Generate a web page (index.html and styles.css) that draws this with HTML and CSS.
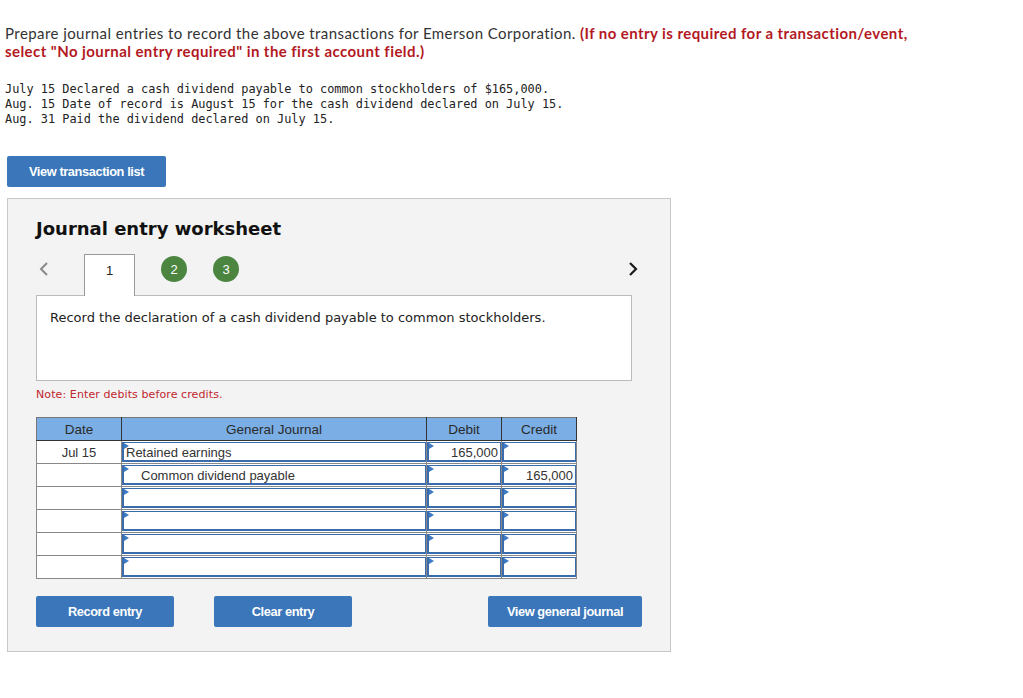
FILE: index.html
```html
<!DOCTYPE html>
<html lang="en">
<head>
    <meta charset="UTF-8">
    <title>Journal entry worksheet</title>
    <link rel="stylesheet" href="styles.css">
</head>
<body>
    <p class="intro">
        Prepare journal entries to record the above transactions for Emerson Corporation.
        <strong>(If no entry is required for a transaction/event,</strong>
        <strong>select "No journal entry required" in the first account field.)</strong>
    </p>

    <pre class="transactions">July 15 Declared a cash dividend payable to common stockholders of $165,000.
Aug. 15 Date of record is August 15 for the cash dividend declared on July 15.
Aug. 31 Paid the dividend declared on July 15.</pre>

    <button class="btn btn-list">View transaction list</button>

    <div class="worksheet">
        <h2>Journal entry worksheet</h2>

        <div class="tabs">
            <span class="arrow arrow-prev">
                <svg width="10" height="16" viewBox="0 0 10 16"><path d="M8 2 L2 8 L8 14" fill="none" stroke="#8a8a8a" stroke-width="2"/></svg>
            </span>
            <span class="tab active">1</span>
            <span class="tab done">2</span>
            <span class="tab done">3</span>
            <span class="arrow arrow-next">
                <svg width="10" height="16" viewBox="0 0 10 16"><path d="M2 2 L8 8 L2 14" fill="none" stroke="#1a1a1a" stroke-width="2.2"/></svg>
            </span>
        </div>

        <div class="description">Record the declaration of a cash dividend payable to common stockholders.</div>

        <p class="note">Note: Enter debits before credits.</p>

        <table class="journal">
            <thead>
                <tr>
                    <th class="col-date">Date</th>
                    <th class="col-account">General Journal</th>
                    <th class="col-amount">Debit</th>
                    <th class="col-amount">Credit</th>
                </tr>
            </thead>
            <tbody>
                <tr>
                    <td class="date">Jul 15</td>
                    <td><div class="field">Retained earnings</div></td>
                    <td><div class="field num">165,000</div></td>
                    <td><div class="field num"></div></td>
                </tr>
                <tr>
                    <td class="date"></td>
                    <td><div class="field indent">Common dividend payable</div></td>
                    <td><div class="field num"></div></td>
                    <td><div class="field num">165,000</div></td>
                </tr>
                <tr>
                    <td class="date"></td>
                    <td><div class="field"></div></td>
                    <td><div class="field num"></div></td>
                    <td><div class="field num"></div></td>
                </tr>
                <tr>
                    <td class="date"></td>
                    <td><div class="field"></div></td>
                    <td><div class="field num"></div></td>
                    <td><div class="field num"></div></td>
                </tr>
                <tr>
                    <td class="date"></td>
                    <td><div class="field"></div></td>
                    <td><div class="field num"></div></td>
                    <td><div class="field num"></div></td>
                </tr>
                <tr>
                    <td class="date"></td>
                    <td><div class="field"></div></td>
                    <td><div class="field num"></div></td>
                    <td><div class="field num"></div></td>
                </tr>
            </tbody>
        </table>

        <div class="actions">
            <button class="btn btn-record">Record entry</button>
            <button class="btn btn-clear">Clear entry</button>
            <button class="btn btn-view">View general journal</button>
        </div>
    </div>
</body>
</html>
```

FILE: styles.css
```css
body {
    margin: 0;
    padding: 24px 5px 40px;
    background: #fff;
    color: #333;
    font-family: 'Lato', 'Liberation Sans', sans-serif;
}
.intro {
    margin: 0;
    font-size: 15px;
    line-height: 18px;
    letter-spacing: 0.43px;
    width: 915px;
}
.intro strong {
    color: #b3191f;
    font-weight: 700;
}
.transactions {
    margin: 22px 0 0;
    font-family: 'DejaVu Sans Mono', monospace;
    font-size: 11.9px;
    line-height: 15px;
    color: #222;
}
.btn {
    display: block;
    height: 31px;
    border: none;
    border-radius: 2px;
    background: #3a76b9;
    color: #fff;
    font-family: 'Liberation Sans', Arial, sans-serif;
    font-size: 12.8px;
    font-weight: 700;
    letter-spacing: -0.4px;
    cursor: pointer;
}
.btn-list {
    margin: 29px 0 0 2px;
    width: 159px;
}
.worksheet {
    margin: 11px 0 0 2px;
    width: 634px;
    padding: 18px 0 24px 28px;
    background: #f3f3f3;
    border: 1px solid #c8c8c8;
}
.worksheet h2 {
    margin: 0;
    font-family: 'DejaVu Sans', Verdana, sans-serif;
    font-size: 18px;
    font-weight: 700;
    color: #111;
    line-height: 24px;
}
.tabs {
    display: flex;
    align-items: flex-start;
    height: 41px;
    margin-top: 13px;
    width: 602px;
}
.arrow {
    display: flex;
    margin-top: 7px;
}
.arrow-prev {
    margin-left: 3px;
}
.arrow-next {
    margin-left: auto;
}
.tab {
    display: flex;
    align-items: center;
    justify-content: center;
    font-family: 'Liberation Sans', Arial, sans-serif;
    font-size: 13px;
}
.tab.active {
    width: 51px;
    height: 42px;
    margin-left: 35px;
    padding-bottom: 10px;
    background: #fff;
    border: 1px solid #999;
    border-bottom: none;
    box-sizing: border-box;
    color: #222;
    position: relative;
    z-index: 1;
}
.tab.done {
    width: 26px;
    height: 26px;
    margin-top: 2px;
    border-radius: 50%;
    background: #4b8540;
    color: #fff;
}
.tab.active + .tab.done {
    margin-left: 26px;
}
.tab.done + .tab.done {
    margin-left: 26px;
}
.description {
    width: 596px;
    height: 86px;
    box-sizing: border-box;
    padding: 14px 13px;
    background: #fff;
    border: 1px solid #bbb;
    font-family: 'DejaVu Sans', Verdana, sans-serif;
    font-size: 13px;
    color: #222;
}
.note {
    margin: 7px 0 16px;
    font-family: 'DejaVu Sans', Verdana, sans-serif;
    font-size: 11px;
    letter-spacing: 0.1px;
    color: #c0262d;
}
.journal {
    border-collapse: collapse;
    width: 541px;
    font-family: 'Liberation Sans', Arial, sans-serif;
    font-size: 13px;
    color: #333;
    border: 1px solid #777;
}
.journal th {
    height: 22px;
    padding: 0;
    background: #7aaee4;
    border: 1px solid #333;
    border-top-color: #777;
    font-weight: 400;
    font-size: 13.5px;
    color: #2a2a2a;
}
.journal th.col-date {
    width: 84px;
    border-left-color: #777;
}
.journal th.col-account {
    width: 304px;
}
.journal th.col-amount {
    width: 74px;
}
.journal td {
    height: 23px;
    padding: 0;
    background: #fff;
    border: 1px solid #888;
    box-sizing: border-box;
}
.journal td.date {
    text-align: center;
}
.field {
    position: relative;
    height: 20px;
    line-height: 19px;
    box-sizing: border-box;
    border: 1px solid #3a6cad;
    border-left-width: 2px;
    border-bottom-width: 2px;
    padding: 0 2px;
    background: #fff;
    white-space: nowrap;
}
.field::before {
    content: "";
    position: absolute;
    left: 0;
    top: 0;
    border-style: solid;
    border-width: 3px 0 3px 5px;
    border-color: transparent transparent transparent #3b7ac4;
}
.field.indent {
    padding-left: 17px;
}
.field.num {
    text-align: right;
}
.actions {
    display: flex;
    margin-top: 17px;
    width: 606px;
}
.btn-record,
.btn-clear {
    width: 138px;
}
.btn-clear {
    margin-left: 40px;
}
.btn-view {
    width: 154px;
    margin-left: auto;
}
```
